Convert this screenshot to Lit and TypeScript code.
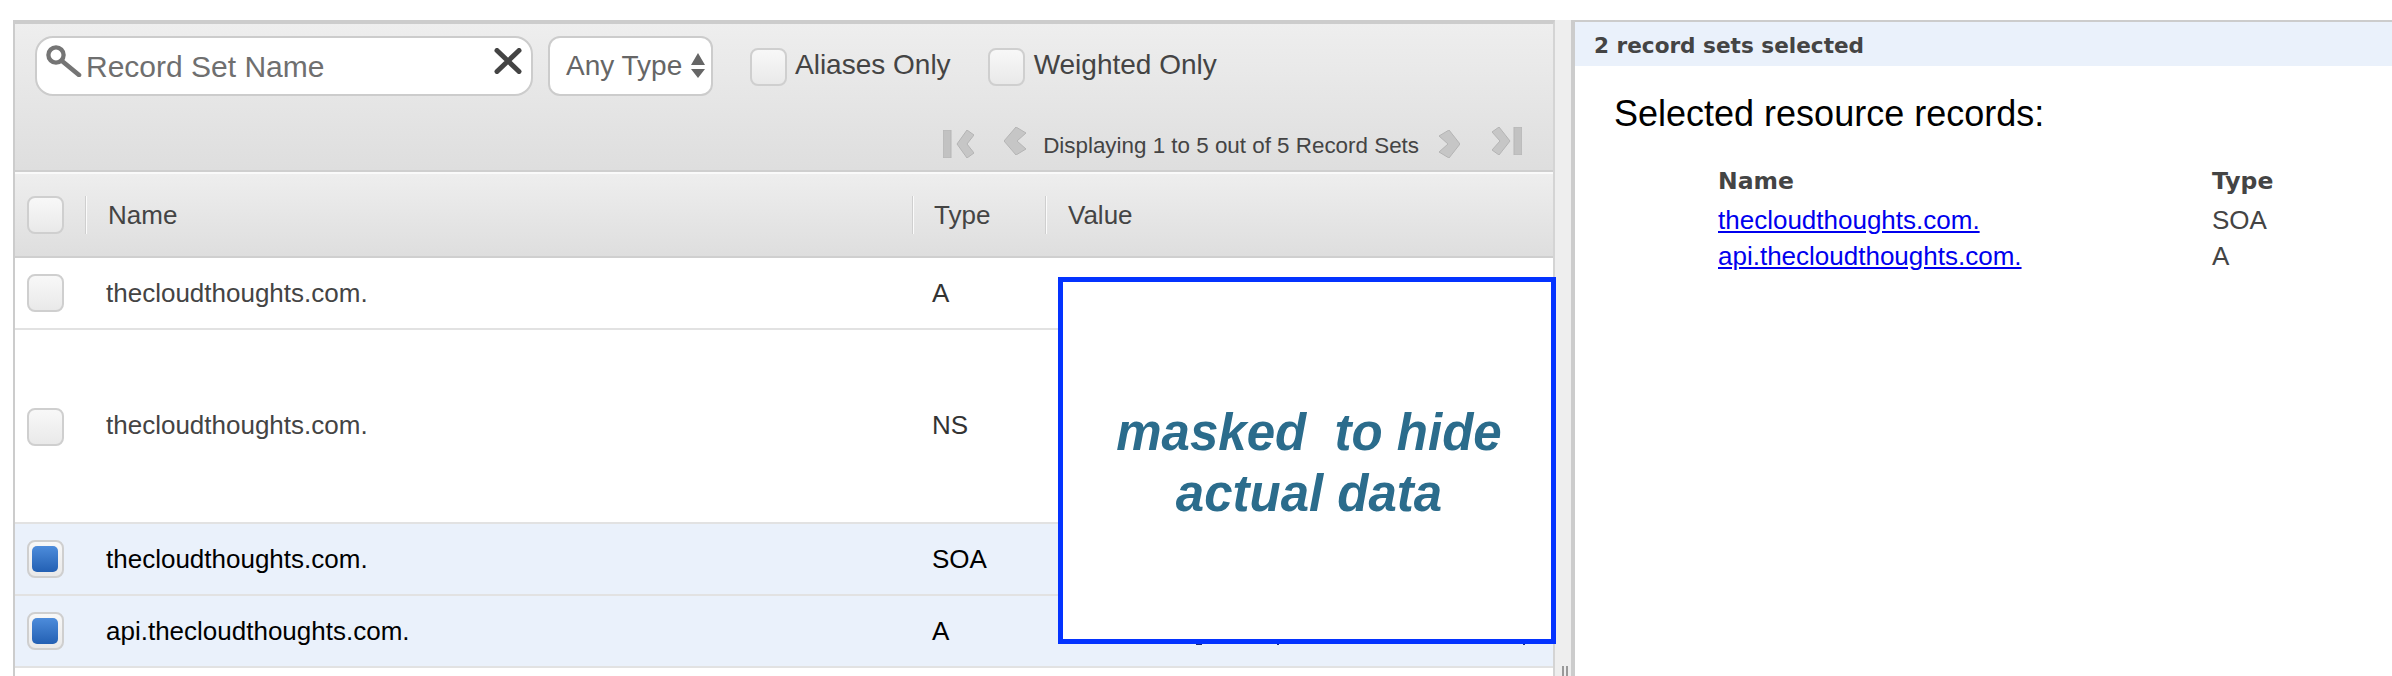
import { LitElement, html, css, svg } from "lit";
import { customElement } from "lit/decorators.js";

const rows = [
  { name: "thecloudthoughts.com.", type: "A", cls: "r1", sel: false },
  { name: "thecloudthoughts.com.", type: "NS", cls: "r2", sel: false },
  { name: "thecloudthoughts.com.", type: "SOA", cls: "r3", sel: true },
  { name: "api.thecloudthoughts.com.", type: "A", cls: "r3", sel: true },
];

const chev = (d: string, w: number, bar?: number) => html`<svg class="chev" width=${w} height="28" viewBox="0 0 ${w} 28">
  ${bar !== undefined ? svg`<rect x=${bar} y="0" width="8" height="28" fill="#c2c2c2" stroke="#b6b6b6" stroke-width="1"/>` : ""}
  <polygon points=${d} fill="#c6c6c6" stroke="#b4b4b4" stroke-width="1" stroke-linejoin="round"/>
</svg>`;

@customElement("app-root")
export class AppRoot extends LitElement {
  static styles = css`
    :host {
      display: block;
      position: relative;
      height: 676px;
      overflow: hidden;
      background: #fff;
      font-family: "Liberation Sans", Arial, sans-serif;
      color: #444;
    }
    .page { display: flex; height: 656px; padding: 20px 0 0 13px; }
    .left {
      width: 1542px; flex: none; box-sizing: border-box;
      border-top: 4px solid #ccc; border-left: 2px solid #ccc; border-right: 2px solid #d4d4d4;
    }
    .toolbar {
      height: 146px; box-sizing: border-box; padding-top: 12px;
      background: linear-gradient(#eeeeee, #dedede);
      border-bottom: 0; display: flex; flex-direction: column;
    }
    .sep { height: 2px; background: #cfcfcf; }
    .sep2 { height: 2px; background: #fafafa; }
    .filters { display: flex; align-items: flex-start; padding-left: 20px; height: 60px; }
    .search {
      width: 498px; height: 60px; box-sizing: border-box; flex: none;
      border: 2px solid #ccc; border-radius: 18px; background: #fff;
      display: flex; align-items: center; color: #6f6f6f; font-size: 30px;
    }
    .search .mag { margin: -10px 4px 0 9px; filter: blur(0.5px); flex: none; }
    .search .label { padding-top: 2px; }
    .search .x { margin-left: auto; margin-right: 9px; margin-top: -10px; flex: none; }
    .select {
      width: 165px; height: 60px; box-sizing: border-box; margin-left: 15px; flex: none;
      border: 2px solid #ccc; border-radius: 12px; background: #fff;
      display: flex; align-items: center; padding-left: 16px; color: #666; font-size: 28px;
    }
    .select svg { margin-left: 9px; flex: none; }
    .opt { display: flex; align-items: center; margin-left: 37px; height: 38px; margin-top: 12px; font-size: 28px; color: #444; }
    .opt span { margin-left: 8px; margin-top: -5px; }
    .opt.w span { margin-left: 9px; }
    .cb {
      display: block; flex: none; width: 37px; height: 38px; box-sizing: border-box;
      border: 2px solid #cfcfcf; border-radius: 8px;
      background: linear-gradient(#f8f8f8, #e9e9e9);
      position: relative;
    }
    .cb.on::after {
      content: ""; position: absolute; left: 3px; top: 4px; width: 26px; height: 26px;
      border-radius: 5px;
      background: linear-gradient(#4d8cdb, #2360b3);
    }
    .pager {
      display: flex; align-items: center; justify-content: flex-end;
      margin-top: 34px; padding-right: 31px; height: 28px; font-size: 22.4px; color: #444;
    }
    .pager .gap30 { margin-left: 30px; }
    .pager .txt { margin: 0 20px 0 17px; padding-top: 4px; }
    .pager .gap32 { margin-left: 32px; }
    .head {
      height: 82px; display: grid; grid-template-columns: 70px 827px 133px 1fr; align-items: center;
      background: linear-gradient(#eeeeee, #dedede); font-size: 26px; color: #444;
    }
    .head .c { display: flex; align-items: center; }
    .div { display: block; width: 2px; height: 38px; background: linear-gradient(90deg, #cfcfcf 50%, #fbfbfb 50%); margin-right: 21px; flex: none; }
    .head .c:nth-child(3) .div { margin-right: 20px; }
    .head .c:nth-child(4) .div { margin-right: 21px; }
    .c0 { padding-left: 12px; }
    .row {
      display: grid; grid-template-columns: 70px 827px 133px 1fr; align-items: center;
      font-size: 26px; color: #444; background: #fff;
    }
    .row .name { padding-left: 21px; }
    .row .type { padding-left: 20px; }
    .row .tcell { color: #333; }
    .sel { background: #eaf1fb; color: #000; }
    .sel .tcell { color: #000; }
    .line { height: 2px; background: #e2e2e2; }
    .r1 { height: 70px; }
    .r2 { height: 192px; }
    .r2 .name, .r2 .tcell { padding-bottom: 2px; }
    .r2 .cb { margin-top: 2px; }
    .r3 { height: 70px; }
    .gutter {
      width: 16px; flex: none; background: #eeeeee; border-right: 2px solid #ccc;
      display: flex; justify-content: center; align-items: flex-end;
    }
    .grip { width: 6px; height: 10px; border-left: 2px solid #999; border-right: 2px solid #999; box-sizing: border-box; margin-left: 3px; margin-bottom: 0; }
    .right { flex: 1; border-top: 2px solid #ccc; border-left: 2px solid #ccc; }
    .band {
      height: 44px; box-sizing: border-box; padding: 3px 0 0 19px; background: #eaf1fb; display: flex; align-items: center;
      font: bold 21.6px "DejaVu Sans", Verdana, sans-serif; color: #444;
    }
    h2 { margin: 27px 0 0 39px; font-size: 36px; font-weight: 400; color: #000; line-height: 42px; }
    .tbl { display: grid; grid-template-columns: 494px 1fr; margin: 31px 0 0 143px; grid-auto-rows: 36px; align-items: center; font-size: 26px; color: #444; }
    .tbl b { font: bold 23.5px "DejaVu Sans", Verdana, sans-serif; color: #444; margin-bottom: 6px; }
    a { color: #0000ee; text-decoration: underline; }
    .mask {
      position: absolute; left: 1058px; top: 277px; width: 498px; height: 367px; box-sizing: border-box;
      border: 5px solid #0433ff; background: #fff;
      display: flex; flex-direction: column; align-items: center; justify-content: center;
      padding: 4px 0 0 4px;
      font: italic bold 51px/61px "Liberation Sans", Arial, sans-serif; color: #2b6c8c; white-space: pre;
    }
    .speck { position: absolute; top: 362px; height: 1px; background: #1c2b7a; }
  `;

  render() {
    return html`
      <div class="page">
        <div class="left">
          <div class="toolbar">
            <div class="filters">
              <div class="search">
                <svg class="mag" width="36" height="32" viewBox="0 0 36 32" fill="none" stroke="#757575">
                  <circle cx="10" cy="10" r="7.6" stroke-width="4.3"/>
                  <path d="M16 16 L33 30" stroke-width="4.6" stroke-linecap="round"/>
                </svg>
                <span class="label">Record Set Name</span>
                <svg class="x" width="28" height="26" viewBox="0 0 28 26" stroke="#444" stroke-width="5" stroke-linecap="round">
                  <path d="M3 2.5 L25 23.5 M25 2.5 L3 23.5"/>
                </svg>
              </div>
              <div class="select">
                <span>Any Type</span>
                <svg width="14" height="26" viewBox="0 0 14 26" fill="#666">
                  <path d="M7 0 L14 12 H0 Z M0 16 H14 L7 25 Z"/>
                </svg>
              </div>
              <label class="opt"><i class="cb"></i><span>Aliases Only</span></label>
              <label class="opt w"><i class="cb"></i><span>Weighted Only</span></label>
            </div>
            <div class="pager">
              ${chev("14,14 24,0 31,5 24,14 31,23 24,28", 31, 0)}
              <span class="gap30">${chev("0,14 12,0 22,6 13,14 22,22 12,28", 22)}</span>
              <span class="txt">Displaying 1 to 5 out of 5 Record Sets</span>
              ${chev("0,6 10,0 21,14 10,28 0,22 9,14", 21)}
              <span class="gap32">${chev("0,5 7,0 18,14 7,28 0,23 8,14", 30, 22)}</span>
            </div>
          </div>
          <div class="sep"></div>
          <div class="sep2"></div>
          <div class="head">
            <div class="c c0"><i class="cb"></i></div>
            <div class="c"><i class="div"></i>Name</div>
            <div class="c"><i class="div"></i>Type</div>
            <div class="c"><i class="div"></i>Value</div>
          </div>
          <div class="sep"></div>
          ${rows.map(
            (r) => html`
              <div class="row ${r.cls} ${r.sel ? "sel" : ""}">
                <div class="c0"><i class="cb ${r.sel ? "on" : ""}"></i></div>
                <div class="name">${r.name}</div>
                <div class="type tcell">${r.type}</div>
                <div></div>
              </div>
              <div class="line"></div>
            `
          )}
        </div>
        <div class="gutter"><div class="grip"></div></div>
        <div class="right">
          <div class="band">2 record sets selected</div>
          <h2>Selected resource records:</h2>
          <div class="tbl">
            <b>Name</b><b>Type</b>
            <a href="#">thecloudthoughts.com.</a><span>SOA</span>
            <a href="#">api.thecloudthoughts.com.</a><span>A</span>
          </div>
        </div>
      </div>
      <div class="mask">
        <div>masked  to hide</div>
        <div>actual data</div>
        ${[[133, 6], [214, 2], [460, 2]].map(
          ([l, w]) => html`<i class="speck" style="left:${l}px;width:${w}px"></i>`
        )}
      </div>
    `;
  }
}
